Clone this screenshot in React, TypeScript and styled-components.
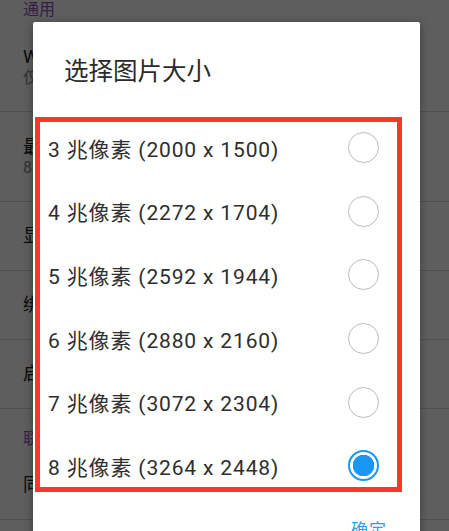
import React, { useState } from 'react'
import styled, { createGlobalStyle } from 'styled-components'

const GlobalStyle = createGlobalStyle`
  html, body {
    margin: 0;
    padding: 0;
    height: 100%;
    overflow: hidden;
    background: #ffffff;
  }
  body {
    font-family: Roboto, "Noto Sans", "Noto Sans CJK SC", sans-serif;
  }
`

type SettingItem = {
  title: string
  summary?: string
}

type Section = {
  header: string
  items: SettingItem[]
}

const sections: Section[] = [
  {
    header: '通用',
    items: [
      { title: 'WLAN 下自动上传', summary: '仅在连接 WLAN 时上传图片' },
      { title: '最大图片大小', summary: '8 兆像素 (3264 x 2448)' },
      { title: '显示网格线' },
      { title: '绑定云端账号' },
      { title: '启动时打开相机' },
    ],
  },
  {
    header: '联系与同步',
    items: [{ title: '同步设置' }],
  },
]

const sizes = [
  { mp: 3, size: '2000 x 1500' },
  { mp: 4, size: '2272 x 1704' },
  { mp: 5, size: '2592 x 1944' },
  { mp: 6, size: '2880 x 2160' },
  { mp: 7, size: '3072 x 2304' },
  { mp: 8, size: '3264 x 2448' },
]

export default function App() {
  const [selected, setSelected] = useState(8)

  return (
    <Root>
      <GlobalStyle />
      <Settings>
        {sections.map((section, i) => (
          <div key={section.header}>
            <SectionHeader $first={i === 0}>{section.header}</SectionHeader>
            {section.items.map((item) => (
              <SettingRow key={item.title} $tall={!!item.summary}>
                <SettingTitle>{item.title}</SettingTitle>
                {item.summary && <SettingSummary>{item.summary}</SettingSummary>}
              </SettingRow>
            ))}
          </div>
        ))}
      </Settings>

      <Overlay>
        <Dialog>
          <Title>选择图片大小</Title>
          <Highlight>
            <OptionList>
              {sizes.map((s) => (
                <Option key={s.mp} onClick={() => setSelected(s.mp)}>
                  <OptionLabel>
                    {s.mp} 兆像素 ({s.size})
                  </OptionLabel>
                  <Radio $checked={selected === s.mp} />
                </Option>
              ))}
            </OptionList>
          </Highlight>
          <Footer>
            <FooterButton>确定</FooterButton>
          </Footer>
        </Dialog>
      </Overlay>
    </Root>
  )
}

const Root = styled.div`
  position: relative;
  width: 449px;
  height: 531px;
  overflow: hidden;
`

const Settings = styled.div`
  background: #ffffff;
  height: 100%;
`

const SectionHeader = styled.div<{ $first: boolean }>`
  padding: ${(p) => (p.$first ? '0' : '20px')} 23px 0;
  height: 22px;
  line-height: 20px;
  font-size: 16px;
  color: #9b4fc2;
`

const SettingRow = styled.div<{ $tall: boolean }>`
  display: flex;
  flex-direction: column;
  justify-content: center;
  box-sizing: border-box;
  height: ${(p) => (p.$tall ? '90px' : '69px')};
  padding: 0 23px;
  border-bottom: 1px solid #d6d6d6;
`

const SettingTitle = styled.div`
  font-size: 18px;
  line-height: 22px;
  color: #202020;
`

const SettingSummary = styled.div`
  font-size: 16px;
  line-height: 20px;
  color: #8a8a8a;
`

const Overlay = styled.div`
  position: absolute;
  inset: 0;
  background: rgba(0, 0, 0, 0.63);
  display: flex;
  align-items: flex-start;
`

const Dialog = styled.div`
  margin: 22px 0 0 33px;
  width: 387px;
  background: #ffffff;
  border-radius: 2px;
  box-shadow: 0 2px 10px rgba(0, 0, 0, 0.35);
  flex-shrink: 0;
`

const Title = styled.div`
  padding: 36px 31px 0;
  font-size: 24.5px;
  line-height: 28px;
  color: #2b2b2b;
`

const Highlight = styled.div`
  margin: 31px 18px 0 2px;
  border: 5px solid #fb3530;
  height: 365px;
  box-sizing: content-box;
`

const OptionList = styled.div`
  margin-top: -6px;
`

const Option = styled.div`
  display: flex;
  align-items: center;
  justify-content: space-between;
  height: 63.6px;
  padding: 0 18px 0 8px;
  cursor: pointer;
`

const OptionLabel = styled.span`
  font-size: 21px;
  letter-spacing: 0.85px;
  color: #2e2e2e;
`

const Radio = styled.span<{ $checked: boolean }>`
  width: 31px;
  height: 31px;
  box-sizing: border-box;
  border-radius: 50%;
  border: ${(p) => (p.$checked ? '2px solid #1a97f5' : '1.5px solid #bdbdbd')};
  background: ${(p) =>
    p.$checked
      ? 'radial-gradient(circle, #1a97f5 0 10.5px, #ffffff 11px)'
      : '#ffffff'};
`

const Footer = styled.div`
  display: flex;
  justify-content: flex-end;
  padding: 27px 33px 16px;
`

const FooterButton = styled.span`
  font-size: 17px;
  line-height: 22px;
  color: #2a9ff2;
  letter-spacing: 1px;
`
